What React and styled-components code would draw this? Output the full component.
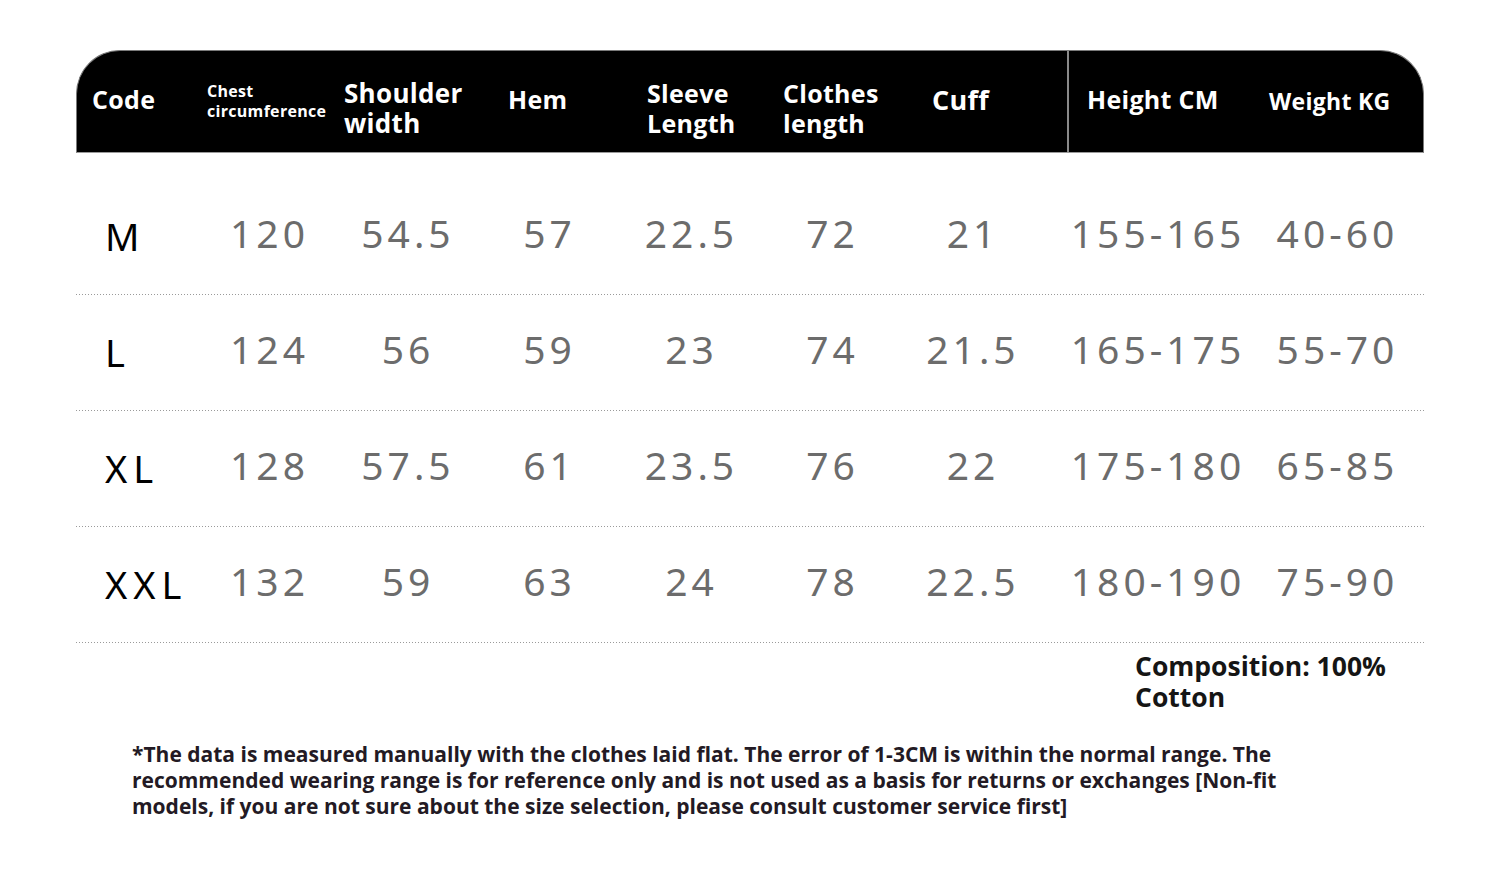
import React from "react";
import styled, { createGlobalStyle } from "styled-components";

const GlobalStyle = createGlobalStyle`
  html, body {
    margin: 0;
    padding: 0;
    background: #ffffff;
  }
  body {
    font-family: "Open Sans", "Noto Sans", sans-serif;
  }
`;

const COLUMNS = "123px 137px 140px 143px 141px 141px 164px 182px 177px";

const Page = styled.div`
  width: 1500px;
  height: 876px;
  box-sizing: border-box;
  padding: 50px 76px 0 76px;
  overflow: hidden;
`;

const HeaderRow = styled.div`
  display: grid;
  grid-template-columns: ${COLUMNS};
  height: 103px;
  background: #000;
  border: 1px solid #7a7a7a;
  border-bottom-color: #9a9a9a;
  box-sizing: border-box;
  border-radius: 44px 44px 0 0;
  margin-bottom: 26px;
`;

const HeadCell = styled.div`
  display: flex;
  align-items: center;
  padding-left: ${(p) => p.$pl}px;
  padding-top: ${(p) => p.$pt || 0}px;
  padding-bottom: ${(p) => p.$pb || 0}px;
  color: #fff;
  font-family: "Open Sans", "Noto Sans", sans-serif;
  font-weight: 700;
  font-size: ${(p) => p.$size || 25}px;
  line-height: ${(p) => p.$lh || 30}px;
  letter-spacing: 0.3px;
  white-space: nowrap;
  ${(p) => p.$divider && "border-left: 2px solid #8a8a8a; margin-left: 1px;"}
`;

const Row = styled.div`
  display: grid;
  grid-template-columns: ${COLUMNS};
  height: 116px;
  align-items: center;
  background-image: linear-gradient(to right, #9a9a9a 1px, transparent 1px);
  background-size: 3px 1px;
  background-repeat: repeat-x;
  background-position: left bottom;
`;

const SizeCell = styled.div`
  padding-left: 29px;
  padding-bottom: 2px;
  color: #000;
  font-family: "Noto Sans", "Open Sans", sans-serif;
  font-size: 38px;
  letter-spacing: 6px;
  line-height: 1;
`;

const ValueCell = styled.div`
  text-align: center;
  padding-left: ${(p) => (p.$shift > 0 ? p.$shift : 0)}px;
  padding-right: ${(p) => (p.$shift < 0 ? -p.$shift : 0)}px;
  padding-bottom: 10px;
  color: #6c6c6c;
  font-family: "Noto Sans", "Open Sans", sans-serif;
  font-size: 39px;
  letter-spacing: 4px;
  line-height: 1;
  white-space: nowrap;
`;

const Composition = styled.div`
  display: flex;
  justify-content: flex-end;
  padding: 8px 26px 0 0;
`;

const CompositionText = styled.div`
  width: 263px;
  color: #151515;
  font-family: "Open Sans", "Noto Sans", sans-serif;
  font-weight: 700;
  font-size: 26.5px;
  line-height: 31px;
`;

const Note = styled.p`
  margin: 28px 0 0 56px;
  color: #231a24;
  font-family: "Open Sans", "Noto Sans", sans-serif;
  font-weight: 700;
  font-size: 21px;
  line-height: 26px;
  white-space: nowrap;
`;

const headers = [
  { label: "Code", pl: 15, pb: 6 },
  { label: ["Chest", "circumference"], pl: 7, size: 16, lh: 20, pb: 2 },
  { label: ["Shoulder", "width"], pl: 7, size: 26, pt: 12 },
  { label: "Hem", pl: 31, pb: 6 },
  { label: ["Sleeve", "Length"], pl: 27, pt: 12 },
  { label: ["Clothes", "length"], pl: 22, pt: 12 },
  { label: "Cuff", size: 27, pl: 30, pb: 4 },
  { label: "Height CM", pl: 18, divider: true, pb: 6 },
  { label: "Weight KG", pl: 21, size: 23, pb: 2 },
];

// horizontal nudge per value column, to sit where the reference puts it
const shifts = [4, 4, 4, 4, 4, -20, 4, 4];

const rows = [
  ["M", "120", "54.5", "57", "22.5", "72", "21", "155-165", "40-60"],
  ["L", "124", "56", "59", "23", "74", "21.5", "165-175", "55-70"],
  ["XL", "128", "57.5", "61", "23.5", "76", "22", "175-180", "65-85"],
  ["XXL", "132", "59", "63", "24", "78", "22.5", "180-190", "75-90"],
];

export default function App() {
  return (
    <Page>
      <GlobalStyle />
      <HeaderRow>
        {headers.map((h, i) => (
          <HeadCell
            key={i}
            $pl={h.pl}
            $pt={h.pt}
            $pb={h.pb}
            $size={h.size}
            $lh={h.lh}
            $divider={h.divider}
          >
            {Array.isArray(h.label) ? (
              <span>
                {h.label[0]}
                <br />
                {h.label[1]}
              </span>
            ) : (
              h.label
            )}
          </HeadCell>
        ))}
      </HeaderRow>
      {rows.map((r) => (
        <Row key={r[0]}>
          <SizeCell>{r[0]}</SizeCell>
          {r.slice(1).map((v, i) => (
            <ValueCell key={i} $shift={shifts[i]}>
              {v}
            </ValueCell>
          ))}
        </Row>
      ))}
      <Composition>
        <CompositionText>Composition: 100% Cotton</CompositionText>
      </Composition>
      <Note>
        *The data is measured manually with the clothes laid flat. The error of 1-3CM is within the normal range. The
        <br />
        recommended wearing range is for reference only and is not used as a basis for returns or exchanges [Non-fit
        <br />
        models, if you are not sure about the size selection, please consult customer service first]
      </Note>
    </Page>
  );
}
